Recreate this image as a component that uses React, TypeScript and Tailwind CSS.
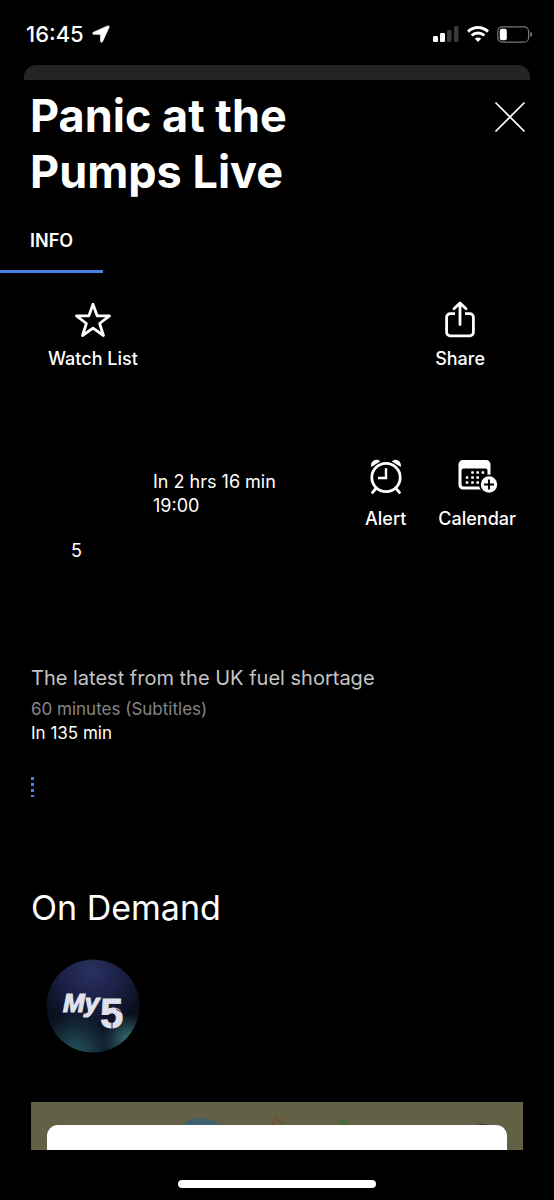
import type { ReactNode } from "react";

function LocationIcon() {
  return (
    <svg width="18" height="18" viewBox="0 0 18 18" fill="#fff" aria-hidden="true">
      <path d="M15.500.9 1.300 7.300C.2 7.800.4 9.300 1.700 9.300l6.200.1c.3 0 .5.2.5.500l.1 6.100c0 1.400 1.600 1.700 2.100.5L17.100 2.400c.4-1.100-.5-2-1.600-1.500Z" stroke="#fff" strokeWidth=".6" />
    </svg>
  );
}

function SignalIcon() {
  return (
    <svg width="26" height="16" viewBox="0 0 26 16" aria-hidden="true">
      <rect x="0" y="10" width="5" height="6" rx="1.200" fill="#fff" />
      <rect x="7" y="7" width="5" height="9" rx="1.200" fill="#fff" />
      <rect x="14" y="4" width="4.500" height="12" rx="1.200" fill="#3a3a3c" />
      <rect x="21" y="0" width="4.500" height="16" rx="1.200" fill="#3a3a3c" />
    </svg>
  );
}

function WifiIcon() {
  return (
    <svg width="22" height="16" viewBox="0 0 22 16" fill="none" stroke="#fff" strokeWidth="2.900" aria-hidden="true">
      <path d="M1 5.600C6.600.1 15.400.1 21 5.600" />
      <path d="M4.700 9.500c3.600-3.400 9-3.400 12.600 0" />
      <path d="M11 16l-3.300-3.400c1.900-1.600 4.700-1.600 6.600 0Z" fill="#fff" stroke="none" />
    </svg>
  );
}

function BatteryIcon() {
  return (
    <svg width="36" height="17" viewBox="0 0 36 17" aria-hidden="true">
      <rect x=".8" y=".8" width="30.800" height="15.400" rx="4.500" fill="none" stroke="#77777a" strokeWidth="1.200" />
      <rect x="2.800" y="2.800" width="7" height="11.400" rx="2" fill="#fff" />
      <path d="M33.200 5.800c2.600.8 2.600 4.600 0 5.400Z" fill="#77777a" />
    </svg>
  );
}

function CloseIcon() {
  return (
    <svg width="32" height="32" viewBox="0 0 32 32" stroke="#fff" strokeWidth="1.700" aria-hidden="true">
      <path d="M1.500 1.500l29 29M30.500 1.500l-29 29" />
    </svg>
  );
}

function StarIcon() {
  return (
    <svg width="38" height="38" viewBox="0 0 38 38" fill="none" stroke="#fff" strokeWidth="2.800" strokeLinejoin="round" aria-hidden="true">
      <path d="M19 3.200l4.100 11.600 12.400.1-9.900 7.600 3.900 12L19 27.200l-10.500 7.300 3.900-12-9.900-7.600 12.400-.1Z" />
    </svg>
  );
}

function ShareIcon() {
  return (
    <svg width="38" height="38" viewBox="0 0 38 38" fill="none" stroke="#fff" strokeWidth="2.800" strokeLinecap="round" strokeLinejoin="round" aria-hidden="true">
      <path d="M14 12.700H9.200a3.600 3.600 0 0 0-3.600 3.600v15a3.600 3.600 0 0 0 3.600 3.600h19.600a3.600 3.600 0 0 0 3.600-3.600v-15a3.600 3.600 0 0 0-3.600-3.600H24" strokeLinecap="butt" />
      <path d="M19 23.500V2.200M13 7.800l6-5.800 6 5.800" />
    </svg>
  );
}

function AlarmIcon() {
  return (
    <svg width="38" height="38" viewBox="0 0 38 38" fill="none" stroke="#fff" strokeWidth="2.800" strokeLinecap="round" aria-hidden="true">
      <circle cx="19" cy="20.500" r="14.200" />
      <path d="M19 11.300v9.700h-8" strokeWidth="2.400" strokeLinecap="butt" />
      <path d="M9 31.500l-3.500 4M29 31.500l3.500 4" />
      <path d="M4.200 10C2.800 4.200 9.500.4 13.200 4.400ZM33.800 10C35.200 4.200 28.500.4 24.800 4.400Z" fill="#fff" stroke="none" />
    </svg>
  );
}

const calendarDots = [
  [16.500, 15.500], [21.700, 15.500], [26.900, 15.500],
  [11, 20.500], [16.500, 20.500], [21.700, 20.500],
  [11, 25.500], [16.500, 25.500], [21.700, 25.500],
];

function CalendarIcon() {
  return (
    <svg width="42" height="38" viewBox="0 0 42 38" aria-hidden="true">
      <path d="M7 3h23a4.500 4.500 0 0 1 4.500 4.500v18H31.500V13.500a2 2 0 0 0-2-2H7.500a2 2 0 0 0-2 2V27.500a2 2 0 0 0 2 2h18v3H7a4.500 4.500 0 0 1-4.500-4.500V7.500A4.500 4.500 0 0 1 7 3Z" fill="#fff" />
      {calendarDots.map(([x, y]) => (
        <rect key={`${x}-${y}`} x={x - 1.300} y={y - 1.300} width="2.600" height="2.600" rx=".5" fill="#fff" />
      ))}
      <circle cx="33" cy="27.500" r="10" fill="#000" />
      <circle cx="33" cy="27.500" r="8.200" fill="#fff" />
      <path d="M28 27.500h10M33 22.500v10" stroke="#000" strokeWidth="1.900" />
    </svg>
  );
}

function My5Logo() {
  return (
    <svg width="94" height="94" viewBox="0 0 94 94" role="img" aria-label="My5">
      <defs>
        <radialGradient id="top" cx=".48" cy=".12" r=".62">
          <stop offset="0" stopColor="#29315f" />
          <stop offset=".5" stopColor="#1c2148" />
          <stop offset="1" stopColor="#0a0f1e" />
        </radialGradient>
        <radialGradient id="left" cx=".32" cy=".98" r=".42">
          <stop offset="0" stopColor="#23515c" />
          <stop offset="1" stopColor="#23515c" stopOpacity="0" />
        </radialGradient>
        <radialGradient id="right" cx=".88" cy=".86" r=".28">
          <stop offset="0" stopColor="#376f74" />
          <stop offset="1" stopColor="#376f74" stopOpacity="0" />
        </radialGradient>
      </defs>
      <circle cx="47" cy="47" r="46.500" fill="url(#top)" />
      <circle cx="47" cy="47" r="46.500" fill="url(#left)" />
      <circle cx="47" cy="47" r="46.500" fill="url(#right)" />
      <g fill="#e0e1ea" stroke="#e0e1ea" className="font-['Liberation_Sans',sans-serif] font-bold">
        <text x="17" y="53" fontSize="26" fontStyle="italic" strokeWidth="1.200">My</text>
        <text x="54" y="69" fontSize="42" strokeWidth=".8">5</text>
      </g>
      <path d="M66 62.500v8M70 50l7 4" stroke="#171b38" strokeWidth=".9" />
    </svg>
  );
}

function ActionButton({ icon, label, roomy = false }: { icon: ReactNode; label: string; roomy?: boolean }) {
  return (
    <button type="button" className={`flex flex-col items-center text-[18px] leading-6 font-medium ${roomy ? "gap-3" : "gap-2"}`}>
      {icon}
      <span>{label}</span>
    </button>
  );
}

export default function App() {
  return (
    <div className="flex min-h-screen flex-col bg-black font-['Inter',sans-serif] text-white">
      <div className="flex h-[65px] items-center justify-between pt-[3px] pr-[21px] pl-[26px]">
        <div className="flex items-center gap-2 text-[22px] leading-7 font-medium">
          <span>16:45</span>
          <LocationIcon />
        </div>
        <div className="flex items-center gap-2">
          <SignalIcon />
          <WifiIcon />
          <BatteryIcon />
        </div>
      </div>
      <div className="mx-6 h-[15px] rounded-t-xl bg-[#242426]" />

      <header className="flex items-start justify-between gap-4 pt-2 pr-7 pl-[30px]">
        <h1 className="w-[300px] text-[45px] leading-[56px] font-bold">Panic at the Pumps Live</h1>
        <button type="button" aria-label="Close" className="mt-[13px]">
          <CloseIcon />
        </button>
      </header>

      <nav className="mt-[29px] flex">
        <a href="#info" className="border-b-[3px] border-[#4a82e4] px-[30px] pb-[17px] text-[18px] leading-6 font-semibold">
          INFO
        </a>
      </nav>

      <main id="info">
        <div className="flex justify-between pt-7 pr-[69px] pl-12">
          <ActionButton icon={<StarIcon />} label="Watch List" />
          <ActionButton icon={<ShareIcon />} label="Share" />
        </div>

        <section className="flex items-start pt-[86px] pr-[38px]">
          <div className="w-[153px] pt-[82px] text-center text-[18px] leading-6">5</div>
          <div className="flex-1 pt-[13px] text-[18px] leading-6">
            <p>In 2 hrs 16 min</p>
            <p>19:00</p>
          </div>
          <div className="flex gap-8">
            <ActionButton icon={<AlarmIcon />} label="Alert" roomy />
            <ActionButton icon={<CalendarIcon />} label="Calendar" roomy />
          </div>
        </section>

        <section className="px-[31px] pt-[99px]">
          <p className="text-[20px] leading-8 text-[#c4c4c4]">The latest from the UK fuel shortage</p>
          <p className="mt-[3px] text-[17px] leading-6 text-[#868686]">60 minutes (Subtitles)</p>
          <p className="text-[17px] leading-6">In 135 min</p>
          <svg className="mt-8" width="3" height="20" viewBox="0 0 3 20" aria-hidden="true">
            <path d="M1.500 0v20" stroke="#4a82e4" strokeWidth="3" strokeDasharray="3 3" />
          </svg>
        </section>

        <section className="pt-[87px]">
          <h2 className="px-[31px] text-[34px] leading-[48px]">On Demand</h2>
          <a href="#my5" className="mt-[27px] ml-[46px] block w-fit">
            <My5Logo />
          </a>
          <div className="mx-[31px] mt-[49px] flex h-12 flex-col bg-[#626145]">
            <svg className="h-[23px] w-full" viewBox="0 0 492 23" aria-hidden="true">
              <circle cx="170" cy="43" r="27" fill="#3f6070" />
              <path d="M241 23l5-8 5 8" fill="none" stroke="#7a4a2c" strokeWidth="1.500" />
              <rect x="308" y="18" width="8" height="5" fill="#48673c" />
              <ellipse cx="451" cy="24" rx="7" ry="2" fill="#303a46" />
            </svg>
            <div className="mx-4 flex-1 rounded-t-[11px] bg-white" />
          </div>
        </section>
      </main>

      <div className="mx-auto mt-[30px] mb-3 h-2 w-[198px] rounded-full bg-white" />
    </div>
  );
}
